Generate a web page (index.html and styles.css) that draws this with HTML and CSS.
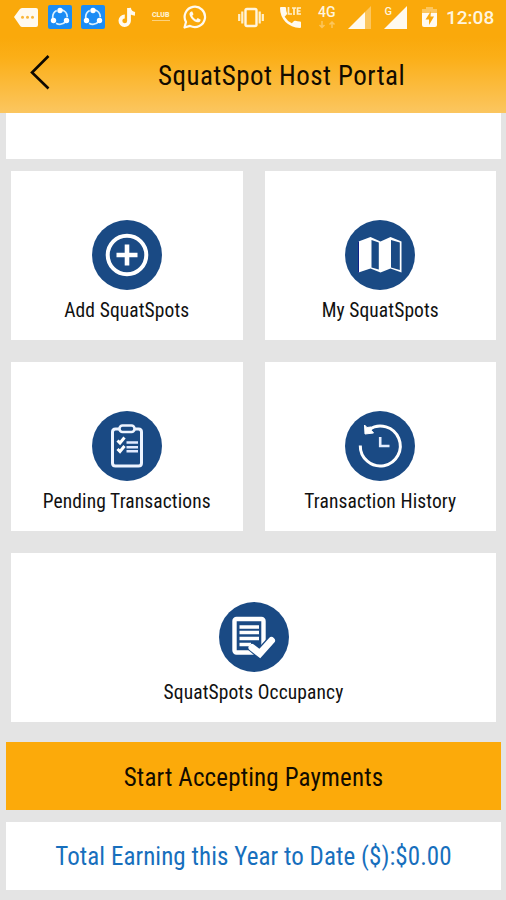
FILE: index.html
```html
<!DOCTYPE html>
<html lang="en">
<head>
    <meta charset="UTF-8" />
    <meta name="viewport" content="width=device-width, initial-scale=1" />
    <title>SquatSpot Host Portal</title>
    <link rel="stylesheet" href="styles.css">
</head>
<body>
    <header class="header">
        <div class="status_bar">
            <div class="notifications">
                <svg width="24" height="24" viewBox="0 0 24 24">
                    <path d="M0 12L5.500 4.500Q6.500 3 8 3H22Q24 3 24 5V20Q24 22 22 22H8Q6.500 22 5.500 20Z" fill="#fffaf0"/>
                    <g fill="#f9b63c"><circle cx="8.500" cy="12.300" r="1.500"/><circle cx="13.500" cy="12.300" r="1.500"/><circle cx="18.500" cy="12.300" r="1.500"/></g>
                </svg>
                <svg class="share" width="24" height="24" viewBox="0 0 24 24">
                    <rect width="24" height="24" rx="2" fill="#1b8cf5"/>
                    <circle cx="12" cy="12" r="7.300" fill="none" stroke="#d9f0ff" stroke-width="1.700" stroke-dasharray="10.500 4.800" stroke-dashoffset="-5"/>
                    <g fill="#fff"><circle cx="12" cy="5.500" r="2.700"/><circle cx="5.500" cy="15.500" r="2.700"/><circle cx="18.500" cy="15.500" r="2.700"/></g>
                </svg>
                <svg class="share" width="24" height="24" viewBox="0 0 24 24">
                    <rect width="24" height="24" rx="2" fill="#1b8cf5"/>
                    <circle cx="12" cy="12" r="7.300" fill="none" stroke="#d9f0ff" stroke-width="1.700" stroke-dasharray="10.500 4.800" stroke-dashoffset="-5"/>
                    <g fill="#fff"><circle cx="12" cy="5.500" r="2.700"/><circle cx="5.500" cy="15.500" r="2.700"/><circle cx="18.500" cy="15.500" r="2.700"/></g>
                </svg>
                <svg class="tiktok" width="18" height="24" viewBox="0 0 18 24">
                    <path d="M11 3V16A4.300 4.300 0 1 1 6.800 11.500M11 3Q11.800 8.500 17 8.800" fill="none" stroke="#fffaf0" stroke-width="3.800"/>
                </svg>
                <div class="club">CLUB</div>
                <svg class="whatsapp" width="24" height="24" viewBox="0 0 24 24">
                    <path d="M1.500 22.500L3 17A10.200 10.200 0 1 1 7 20.900Z" fill="none" stroke="#fffaf0" stroke-width="2.200" stroke-linejoin="round"/>
                    <path d="M8.300 6.500C6.500 7 6 9 7 11C8.500 14.300 11 16.500 14 17.200C16 17.700 17.500 16.500 17.700 14.700L14.700 13.100L13.200 14.700C11.500 14 10 12.500 9.300 10.800L10.500 9.300L9.300 6.500Z" fill="#fffaf0"/>
                </svg>
            </div>
            <div class="system">
                <svg width="26" height="24" viewBox="0 0 26 24">
                    <rect x="7.500" y="4" width="11" height="17" rx="1.500" fill="none" stroke="#fff5df" stroke-width="2.400"/>
                    <path d="M4.300 6.500V18.500M21.700 6.500V18.500M1.200 9V16M24.800 9V16" stroke="#fff0cc" stroke-width="2.200"/>
                </svg>
                <svg class="phone" width="22" height="24" viewBox="0 0 22 24">
                    <path d="M1 2H5Q6 2 6 3Q6 6 7 8.200Q7.300 9 6.700 9.600L4.600 11.800Q7.500 16.500 11.800 18.200L14 16Q14.600 15.500 15.400 15.800Q17.500 16.600 20 16.600Q21 16.600 21 17.600V22Q21 23 20 23Q11 22.500 5.500 17Q0 11 0 3Q0 2 1 2Z" fill="#fffaf0"/>
                    <path d="M8.500 2V9H12M12 3H16M14 3V10M21 3H17.500V9H21M17.500 6H20.500" fill="none" stroke="#fff0cc" stroke-width="1.700"/>
                </svg>
                <div class="network">4G
                    <svg width="18" height="8" viewBox="0 0 18 8"><path d="M4 0V6M1.500 4L4 6.500L6.500 4M14 7V1M11.500 3.500L14 1L16.500 3.500" fill="none" stroke="#fcc65e" stroke-width="1.500"/></svg>
                </div>
                <svg class="signal" width="23" height="24" viewBox="0 0 23 24">
                    <path d="M17 7L23 1V24H17Z" fill="#fcc65e"/>
                    <path d="M0 24L17 7V24Z" fill="#fffaf0"/>
                </svg>
                <svg class="signal_g" width="24" height="24" viewBox="0 0 24 24">
                    <path d="M0 24L23 1V24Z" fill="#fffaf0"/>
                    <text x="0.500" y="10" class="signal_text">G</text>
                </svg>
                <svg class="battery" width="15" height="24" viewBox="0 0 15 24">
                    <path d="M0 4H4V2H11V4H15V8H0Z" fill="#fcc65e"/>
                    <path d="M0 8H15V20Q15 22 13 22H2Q0 22 0 20Z" fill="#fffaf0"/>
                    <path d="M9 6L3.500 14.500H7V20L12 11.500H8.500Z" fill="#faa90b"/>
                </svg>
                <span class="time">12:08</span>
            </div>
        </div>
        <div class="title_bar">
            <svg class="back" width="22" height="36" viewBox="0 0 22 36">
                <path d="M18.500 2L2 18.500L18.500 34.500" fill="none" stroke="#0d0800" stroke-width="2.600"/>
            </svg>
            <h1>SquatSpot Host Portal</h1>
        </div>
    </header>

    <main>
        <div class="notice"></div>
        <div class="menu">
            <a class="card">
                <svg width="70" height="70" viewBox="0 0 70 70">
                    <circle cx="35" cy="35" r="35" fill="#1a4a84"/>
                    <circle cx="35" cy="35" r="19.300" fill="none" stroke="#fff" stroke-width="4"/>
                    <path d="M35 24.500V45.500M24.500 35H45.500" stroke="#fff" stroke-width="4.600"/>
                </svg>
                <span class="label">Add SquatSpots</span>
            </a>
            <a class="card">
                <svg width="70" height="70" viewBox="0 0 70 70">
                    <circle cx="35" cy="35" r="35" fill="#1a4a84"/>
                    <path d="M13.500 21.500L25.500 17L35.500 21.500L45.500 17L56.500 21.500V52.500L45.500 48.500L35.500 52.500L25.500 48.500L13.500 52.500Z" fill="#fff"/>
                    <path d="M26.500 20L33.800 22.500V49.500L26.500 47.500ZM46 20L54.800 22.500V50L46 47.500Z" fill="#1a4a84"/>
                    <path d="M13.500 21.500V52.500" stroke="#10228a" stroke-width="1"/>
                </svg>
                <span class="label">My SquatSpots</span>
            </a>
            <a class="card">
                <svg width="70" height="70" viewBox="0 0 70 70">
                    <circle cx="35" cy="35" r="35" fill="#1a4a84"/>
                    <path d="M27 18H23.500Q20.500 18 20.500 21V52Q20.500 55 23.500 55H46.500Q49.500 55 49.500 52V21Q49.500 18 46.500 18H43" fill="none" stroke="#eef4ff" stroke-width="3"/>
                    <rect x="27.500" y="14.500" width="15" height="6.500" rx="3" fill="none" stroke="#eef4ff" stroke-width="2.600"/>
                    <path d="M25.500 29.500L28 32L32.500 26.500M25.500 38L28 40.500L32.500 35" fill="none" stroke="#fff" stroke-width="3"/>
                    <path d="M34.500 31.500H46M34.500 36.300H46M34.500 40.200H46" stroke="#e1eaff" stroke-width="2.500"/>
                </svg>
                <span class="label">Pending Transactions</span>
            </a>
            <a class="card">
                <svg width="70" height="70" viewBox="0 0 70 70">
                    <circle cx="35" cy="35" r="35" fill="#1a4a84"/>
                    <path d="M15.300 34.500A20 20 0 1 0 24 18.500" fill="none" stroke="#fff" stroke-width="3"/>
                    <path d="M19.500 14L22 16.500L26 16L26.500 19.500L28.500 22L20 23Z" fill="#fff" stroke="#fff" stroke-width="1"/>
                    <path d="M35.200 26V35H44.500" fill="none" stroke="#e4edff" stroke-width="2.600"/>
                </svg>
                <span class="label">Transaction History</span>
            </a>
            <a class="card wide">
                <svg width="70" height="70" viewBox="0 0 70 70">
                    <circle cx="35" cy="35" r="35" fill="#1a4a84"/>
                    <rect x="15.500" y="17" width="29" height="33.500" rx="2" fill="none" stroke="#fff" stroke-width="4.400"/>
                    <path d="M20.500 25H40M20.500 30.500H40M20.500 36.500H40M20.500 42.500H32" stroke="#fff" stroke-width="3.400"/>
                    <path d="M31 43L41 51.500L54.500 36.500" fill="none" stroke="#1a4a84" stroke-width="10"/>
                    <path d="M33 45.500L40.800 51.500L52.500 38.500" fill="none" stroke="#fff" stroke-width="7" stroke-linecap="round"/>
                </svg>
                <span class="label">SquatSpots Occupancy</span>
            </a>
        </div>
        <button type="button" class="payments">Start Accepting Payments</button>
        <div class="earning">Total Earning this Year to Date ($):$0.00</div>
    </main>
</body>
</html>
```

FILE: styles.css
```css
body, html {
    margin: 0;
    padding: 0;
}
body {
    height: 900px;
    overflow: hidden;
    font-family: "Roboto Condensed", Roboto, sans-serif;
    font-stretch: 75%;
    background-color: #e4e4e4;
}
.header {
    height: 113px;
    background: linear-gradient(#faa90b 38px, #fbaf18 58px, #fbc660);
}
.status_bar {
    display: flex;
    justify-content: space-between;
    height: 40px;
    padding: 5px 11px 0 14px;
    box-sizing: border-box;
}
.notifications, .system {
    display: flex;
    align-items: flex-start;
}
.share {
    margin-left: 9.5px;
}
.tiktok {
    margin-left: 13px;
}
.club {
    width: 18px;
    margin: 6px 0 0 16px;
    padding-bottom: 1px;
    border-bottom: 1px solid #fcd27e;
    color: #fff0cc;
    font: 900 7px/8px Roboto, sans-serif;
}
.whatsapp {
    margin-left: 13px;
}
.phone {
    margin-left: 16px;
}
.network {
    display: flex;
    flex-direction: column;
    width: 19px;
    margin-left: 16px;
    color: #fff5df;
    font: 500 14px/14px Roboto, sans-serif;
}
.network svg {
    margin-top: 2px;
}
.signal {
    margin-left: 11px;
}
.signal_g {
    margin-left: 13px;
}
.signal_text {
    fill: #fff5df;
    font: 500 11px Roboto, sans-serif;
}
.battery {
    margin-left: 14px;
}
.time {
    width: 49px;
    margin-left: 9px;
    color: #fff5df;
    font: 500 19px/26px Roboto, sans-serif;
}
.title_bar {
    display: flex;
    align-items: flex-start;
    padding-left: 30px;
}
.back {
    margin-top: 14px;
}
h1 {
    margin: 20px 0 0 106px;
    color: #120b00;
    font-size: 27px;
    line-height: 32px;
    font-weight: 400;
    letter-spacing: 0.45px;
    white-space: nowrap;
}
main {
    padding: 0 5px 0 6px;
}
.notice {
    height: 46px;
    background-color: white;
}
.menu {
    display: grid;
    grid-template-columns: 1fr 1fr;
    gap: 22px;
    padding: 12px 5px 20px;
}
.card {
    display: flex;
    flex-direction: column;
    align-items: center;
    height: 169px;
    padding-top: 49px;
    box-sizing: border-box;
    background-color: white;
}
.wide {
    grid-column: 1 / 3;
}
.label {
    margin-top: 9px;
    color: #111;
    font-size: 19.5px;
    line-height: 24px;
    letter-spacing: 0.1px;
    white-space: nowrap;
}
.payments, .earning {
    display: flex;
    justify-content: center;
    align-items: center;
    width: 100%;
    height: 68px;
    box-sizing: border-box;
    font-size: 25px;
    letter-spacing: 0.15px;
    white-space: nowrap;
}
.payments {
    border: none;
    padding: 3px 0 0;
    background-color: #fcaa0a;
    color: #120b00;
    font-family: inherit;
    font-stretch: inherit;
}
.earning {
    margin-top: 12px;
    padding-top: 1px;
    background-color: white;
    color: #176fbd;
    letter-spacing: 0.07px;
}
```
